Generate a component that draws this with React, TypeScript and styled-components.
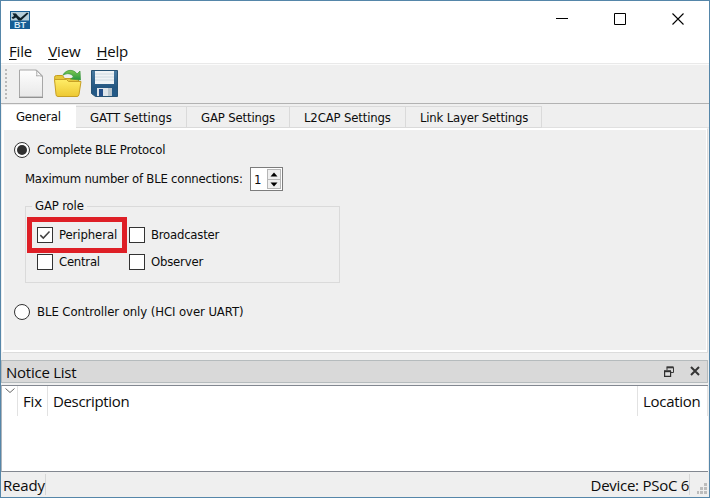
import React from 'react';
import styled, { createGlobalStyle } from 'styled-components';

const GlobalStyle = createGlobalStyle`
  * { box-sizing: border-box; }
  body { margin: 0; background: #efefef; }
  svg { display: block; flex: none; }
`;

const Window = styled.div`
  width: 710px;
  height: 498px;
  display: flex;
  flex-direction: column;
  border: 1px solid #5586a9;
  background: #efefef;
  color: #0c0c0c;
  font: 15px/20px 'Open Sans', 'Noto Sans', sans-serif;
  white-space: nowrap;
  overflow: hidden;
`;

const Label = styled.span<{ $track?: number }>`
  letter-spacing: ${(p) => p.$track ?? 0}px;
`;

const TitleBar = styled.header`
  height: 40px;
  display: flex;
  justify-content: space-between;
  padding: 9px 24px 0 9px;
  background: #fff;
`;

const WindowButtons = styled.div`
  display: flex;
  gap: 44px;
  padding-top: 1px;
`;

const MenuBar = styled.nav`
  height: 23px;
  display: flex;
  gap: 16px;
  padding: 0 0 0 8px;
  background: #fff;
  border-bottom: 1px solid #e9e9e9;
`;

const MenuItem = styled(Label)`
  display: block;
  line-height: 20px;
  &::first-letter {
    text-decoration: underline;
    text-underline-offset: 2px;
  }
`;

const Toolbar = styled.div`
  height: 40px;
  display: flex;
  align-items: flex-start;
  padding: 3px 0 0 4px;
  border-top: 1px solid #fbfbfb;
  border-bottom: 1px solid #b2b2b2;
`;

const Tabs = styled.div`
  height: 24px;
  display: flex;
  align-items: flex-end;
  flex: none;
  padding-left: 1px;
  font: 13px/20px 'DejaVu Sans Condensed', 'DejaVu Sans', sans-serif;
`;

const Tab = styled.div<{ $width: number; $active?: boolean }>`
  width: ${(p) => p.$width}px;
  height: ${(p) => (p.$active ? 23 : 22)}px;
  padding: ${(p) => (p.$active ? '2px 0 0 14px' : '1px 0 0 14px')};
  background: ${(p) => (p.$active ? '#fff' : '#efefef')};
  border: solid #dadada;
  border-width: ${(p) => (p.$active ? '0' : '1px 1px 1px 0')};
`;

const TabSpace = styled.div`
  flex: 1;
  height: 1px;
  background: #e0e0e0;
`;

const Panel = styled.main`
  height: 224px;
  flex: none;
  display: flex;
  flex-direction: column;
  margin: 0 2px 0 1px;
  padding: 11px 0 0 10px;
  border: solid #fff;
  border-width: 2px 1px 2px 2px;
  box-shadow: 1px 1px 0 #dcdcdc;
  font: 13px/18px 'DejaVu Sans Condensed', 'DejaVu Sans', sans-serif;
`;

const Option = styled.label`
  height: 18px;
  display: flex;
  align-items: center;
  gap: 6px;
`;

const RadioOption = styled(Option)`
  gap: 7px;
`;

const Radio = styled.span`
  width: 16px;
  height: 16px;
  display: grid;
  place-items: center;
  border: 1px solid #333;
  border-radius: 50%;
  background: #fff;
`;

const RadioDot = styled.span`
  width: 10px;
  height: 10px;
  border-radius: 50%;
  background: #303030;
`;

const ConnectionRow = styled.div`
  height: 24px;
  display: flex;
  align-items: center;
  justify-content: space-between;
  width: 258px;
  margin: 8px 0 0 11px;
`;

const SpinBox = styled.div`
  width: 33px;
  height: 24px;
  display: flex;
  justify-content: space-between;
  padding: 1px 1px 1px 3px;
  border: 1px solid #7c7c7c;
  background: #fff;
  line-height: 21px;
`;

const Stepper = styled.div`
  width: 14px;
  display: grid;
  grid-template-rows: 1fr 1fr;
  border: 1px solid #b6b6b6;
  background: #efefef;
`;

const StepButton = styled.span`
  display: grid;
  place-items: center;
  & + & { border-top: 1px solid #b6b6b6; }
`;

const RoleGroup = styled.fieldset`
  width: 315px;
  height: 84px;
  margin: 8px 0 0 11px;
  padding: 5px 0 0 1px;
  border: 1px solid #dadada;
`;

const RoleLegend = styled.legend`
  height: 14px;
  margin-left: 5px;
  padding: 0 3px;
  line-height: 14px;
`;

const RoleGrid = styled.div`
  display: grid;
  grid-template-columns: 100px 100px;
  grid-template-rows: 36px 18px;
  margin-top: -1px;
`;

const Role = styled(Option)<{ $inset: number }>`
  height: 100%;
  padding-left: ${(p) => p.$inset}px;
`;

const HighlightedRole = styled(Role)`
  border: 5px solid #de1f26;
`;

const Box = styled.span`
  width: 16px;
  height: 16px;
  flex: none;
  display: grid;
  place-items: center;
  border: 1px solid #333;
  background: #fff;
`;

const ControllerOption = styled(RadioOption)`
  margin-top: 20px;
`;

const DockTitle = styled.div`
  height: 23px;
  flex: none;
  display: flex;
  align-items: center;
  justify-content: space-between;
  margin: 8px 1px 0 0;
  padding: 1px 7px 0 4px;
  background: #d9d9d9;
  border: 1px solid #b5bbbd;
`;

const DockButtons = styled.div`
  display: flex;
  align-items: center;
  gap: 16px;
  margin-top: -2px;
`;

const NoticeTable = styled.section`
  height: 87px;
  flex: none;
  margin: 2px 1px 0 0;
  background: #fff;
  border: solid #828790;
  border-width: 1px 0;
  border-left: 1px solid #aeb4ba;
`;

const HeaderRow = styled.div`
  height: 30px;
  display: grid;
  grid-template-columns: 16px 30px 590px 70px;
`;

const HeaderCell = styled.div`
  padding: 5px 0 0 5px;
  border-right: 1px solid #e2e2e2;
`;

const SortCell = styled(HeaderCell)`
  padding: 2px 0 0 3px;
`;

const StatusBar = styled.footer`
  flex: 1;
  display: flex;
  justify-content: space-between;
  padding: 2px 0 0 2px;
`;

const StatusText = styled.div`
  height: 21px;
  padding-top: 1px;
  border-right: 1px solid #d6d6d6;
`;

const StatusRight = styled.div`
  display: flex;
  gap: 7px;
  padding-right: 2px;
`;

const AppIcon = () => (
  <svg width="20" height="19" viewBox="0 0 20 19">
    <path d="M0 1h20v18H0z" fill="#165d94" />
    <path d="M1 2h18v8.5H1z" fill="#b5ced9" />
    <path d="M2.5 3.2l3.5.3 2 2.5 2.5 2L17 2.5l1.5 1-7.5 7H8.5L6 7.5 3 9 1.5 7.5 4 6z" fill="#0d2029" />
    <text x="10" y="18" textAnchor="middle" fontFamily="Liberation Sans" fontSize="9" fontWeight="700" fill="#d6e9f4">BT</text>
  </svg>
);

const MinimizeIcon = () => (
  <svg width="14" height="16" viewBox="0 0 14 16"><path d="M1 7.5h12" stroke="#000" /></svg>
);
const MaximizeIcon = () => (
  <svg width="14" height="16" viewBox="0 0 14 16"><path d="M1.5 2.5h11v11h-11z" fill="none" stroke="#000" /></svg>
);
const CloseIcon = () => (
  <svg width="14" height="16" viewBox="0 0 14 16"><path d="M1.5 2.5l11 11m0-11l-11 11" stroke="#000" strokeWidth="1.1" /></svg>
);

const ToolIcons = () => (
  <svg width="116" height="32" viewBox="0 0 116 32">
    <defs>
      <linearGradient id="paper" x2="0" y2="1"><stop stopColor="#fefefe" /><stop offset="1" stopColor="#e8e8e8" /></linearGradient>
      <linearGradient id="folder" x2="0" y2="1"><stop stopColor="#ffed68" /><stop offset="1" stopColor="#edc832" /></linearGradient>
      <linearGradient id="disk" x2="0" y2="1"><stop stopColor="#497ba1" /><stop offset=".65" stopColor="#245781" /><stop offset="1" stopColor="#245b8a" /></linearGradient>
      <linearGradient id="arrow" x2="0" y2="1"><stop stopColor="#7ec84f" /><stop offset="1" stopColor="#239640" /></linearGradient>
    </defs>
    <path d="M1 1v30" stroke="#a8a8a8" strokeWidth="1.5" strokeDasharray="2 2" />
    <path d="M14.5 2h17l6 6v21h-23z" fill="url(#paper)" stroke="#a7a7a7" />
    <path d="M14 29.5h24" stroke="#929292" />
    <path d="M31 2c1 2 1 4 .5 6 2-.5 4-.3 6 .5z" fill="#f8f8f8" stroke="#ababab" />
    <path d="M49.5 9.5q0-2 2-2h6l2 3h14v17h-21z" fill="#e6c73b" stroke="#c79e1c" />
    <path d="M58 7c3-6 11-6 14-1l3-3 .5 9-10-1 3-2c-2-4-7-4-10-2z" fill="url(#arrow)" stroke="#3b973c" strokeWidth=".7" />
    <path d="M49.5 11.5h12l2 2H76l-2 13q-.3 2-2 2H53q-2 0-2-2z" fill="url(#folder)" stroke="#c7a025" />
    <path d="M86.5 2.5h26v26h-22l-4-3z" fill="url(#disk)" stroke="#285373" />
    <path d="M90 3h19v13H90z" fill="#eff3f5" />
    <path d="M90 6h19m-19 3h19m-19 3h19" stroke="#cedae1" />
    <path d="M92 20h15v8H92z" fill="#dfe5e9" />
    <path d="M94 21h4v7h-4z" fill="#244f89" />
    <path d="M103 20h4v8h-4z" fill="#b9c5cd" />
  </svg>
);

const CheckIcon = () => (
  <svg width="14" height="14" viewBox="0 0 14 14"><path d="M2.3 7.1l3 3 6.2-6.5" fill="none" stroke="#414141" strokeWidth="1.5" /></svg>
);
const StepIcon = ({ down }: { down?: boolean }) => (
  <svg width="8" height="5" viewBox="0 0 8 5"><path d={down ? 'M.5.5h7L4 4.5z' : 'M.5 4.5h7L4 .5z'} fill="#000" /></svg>
);
const FloatIcon = () => (
  <svg width="10" height="11" viewBox="0 0 10 11">
    <path d="M3 4V1.5h6.5v5H7" fill="none" stroke="#383838" />
    <path d="M2.5 1.3h7" stroke="#383838" strokeWidth="2" />
    <path d="M.6 5.5h6v4.8h-6z" fill="#dedede" stroke="#303030" strokeWidth="1.2" />
    <path d="M0 5.2h7" stroke="#303030" strokeWidth="2" />
  </svg>
);
const DockCloseIcon = () => (
  <svg width="10" height="10" viewBox="0 0 10 10"><path d="M1 1l8 8m0-8L1 9" stroke="#343434" strokeWidth="2" /></svg>
);
const SortIcon = () => (
  <svg width="10" height="5" viewBox="0 0 10 5"><path d="M.5.5l4.5 4 4.5-4" fill="none" stroke="#666" /></svg>
);
const GripIcon = () => (
  <svg width="10" height="21" viewBox="0 0 10 21">
    <path d="M7 9h3v3H7zM7 13h3v3H7zM7 17h3v3H7zM3 13h3v3H3zM3 17h3v3H3zM-1 17h3v3h-3z" fill="#bcbcbc" />
  </svg>
);

export default function App() {
  return (
    <Window>
      <GlobalStyle />
      <TitleBar>
        <AppIcon />
        <WindowButtons><MinimizeIcon /><MaximizeIcon /><CloseIcon /></WindowButtons>
      </TitleBar>
      <MenuBar>
        <MenuItem $track={-0.15}>File</MenuItem>
        <MenuItem $track={-0.1}>View</MenuItem>
        <MenuItem $track={-0.25}>Help</MenuItem>
      </MenuBar>
      <Toolbar><ToolIcons /></Toolbar>
      <Tabs>
        <Tab $width={74} $active><Label $track={-0.2}>General</Label></Tab>
        <Tab $width={111}><Label>GATT Settings</Label></Tab>
        <Tab $width={103}><Label $track={-0.15}>GAP Settings</Label></Tab>
        <Tab $width={116}><Label $track={-0.15}>L2CAP Settings</Label></Tab>
        <Tab $width={136}><Label $track={-0.2}>Link Layer Settings</Label></Tab>
        <TabSpace />
      </Tabs>
      <Panel>
        <RadioOption><Radio><RadioDot /></Radio><Label $track={-0.22}>Complete BLE Protocol</Label></RadioOption>
        <ConnectionRow>
          <Label $track={-0.24}>Maximum number of BLE connections:</Label>
          <SpinBox>1<Stepper><StepButton><StepIcon /></StepButton><StepButton><StepIcon down /></StepButton></Stepper></SpinBox>
        </ConnectionRow>
        <RoleGroup>
          <RoleLegend><Label $track={-0.15}>GAP role</Label></RoleLegend>
          <RoleGrid>
            <HighlightedRole $inset={5}><Box><CheckIcon /></Box><Label $track={-0.1}>Peripheral</Label></HighlightedRole>
            <Role $inset={2}><Box /><Label $track={-0.23}>Broadcaster</Label></Role>
            <Role $inset={10}><Box /><Label $track={-0.25}>Central</Label></Role>
            <Role $inset={2}><Box /><Label $track={-0.2}>Observer</Label></Role>
          </RoleGrid>
        </RoleGroup>
        <ControllerOption><Radio /><Label $track={-0.08}>BLE Controller only (HCI over UART)</Label></ControllerOption>
      </Panel>
      <DockTitle>
        <Label $track={-0.25}>Notice List</Label>
        <DockButtons><FloatIcon /><DockCloseIcon /></DockButtons>
      </DockTitle>
      <NoticeTable>
        <HeaderRow>
          <SortCell><SortIcon /></SortCell>
          <HeaderCell><Label $track={-0.2}>Fix</Label></HeaderCell>
          <HeaderCell><Label $track={-0.35}>Description</Label></HeaderCell>
          <HeaderCell><Label $track={-0.3}>Location</Label></HeaderCell>
        </HeaderRow>
      </NoticeTable>
      <StatusBar>
        <StatusText><Label $track={-0.2}>Ready</Label></StatusText>
        <StatusRight>
          <StatusText><Label $track={-0.27}>Device: PSoC 6</Label></StatusText>
          <GripIcon />
        </StatusRight>
      </StatusBar>
    </Window>
  );
}
